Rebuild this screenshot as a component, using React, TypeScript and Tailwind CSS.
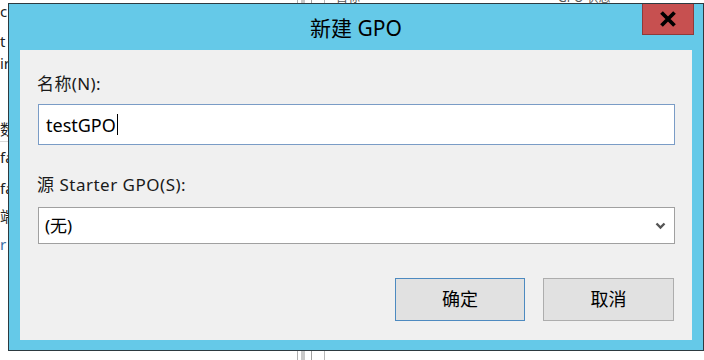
import React from "react";

const FONT = { fontFamily: '"Noto Sans", "Noto Sans CJK SC", sans-serif' };

function BehindWindow() {
  return (
    <div className="flex w-[704px] h-[360px]">
      <div className="w-[8px] shrink-0 flex flex-col text-[15px] leading-[18px] text-[#222] overflow-hidden whitespace-nowrap pt-[2px]">
        <div className="h-[30px]">c</div>
        <div className="h-[22px]">t</div>
        <div className="h-[66px]">ir</div>
        <div className="h-[22px] border-b border-[#d8d8d8]">数</div>
        <div className="h-[30px] pt-[6px]">fa</div>
        <div className="h-[29px] pt-[7px]">fa</div>
        <div className="h-[28px] pt-[6px]">端</div>
        <div className="pt-[6px] text-[#3a6ea5]">r</div>
      </div>
      <div className="w-[289px] shrink-0" />
      <div className="w-px bg-[#b0b0b0]" />
      <div className="w-[3px]" />
      <div className="w-[4px] bg-[#c8c8c8]" />
      <div className="w-[6px]" />
      <div className="w-px bg-[#a0a0a0]" />
      <div className="w-[12px]" />
      <div className="w-px bg-[#b8b8b8]" />
      <div className="flex-1 flex items-start text-[12px] text-[#555] leading-none -mt-[8px]">
        <span className="ml-[11px]">目标</span>
        <span className="ml-[198px]">GPO 状态</span>
      </div>
    </div>
  );
}

export default function App() {
  return (
    <div className="relative w-[704px] h-[360px] overflow-hidden bg-white" style={FONT}>
      <BehindWindow />

      {/* dialog window on the desktop */}
      <div className="absolute left-[8px] top-[3px] w-[696px] h-[348px] border border-[#2d3a40] bg-[#65c9e8] flex flex-col">
        <div className="h-[46px] flex items-start shrink-0 px-[9px]">
          <div className="w-[52px] shrink-0" />
          <div className="flex-1 h-full flex items-center justify-center">
            <span className="text-[21px] text-black leading-none mt-[2px]">新建 GPO</span>
          </div>
          <div className="w-[52px] h-[31px] shrink-0 bg-[#c75050] border border-[#8f3a3a] border-t-0 flex items-center justify-center">
            <svg width="18" height="16" viewBox="0 0 18 16">
              <path d="M2.5 1.5 L15.5 14.5 M15.5 1.5 L2.5 14.5" stroke="#000" strokeWidth="3.8" strokeLinecap="butt" />
            </svg>
          </div>
        </div>
        <div className="mx-[11px] w-[672px] h-[290px] bg-[#f0f0f0] flex flex-col pl-[18px]">
          <div className="mt-[22px] -ml-[1px] h-[23px] text-[17px] leading-[23px] tracking-[0.4px] text-[#1a1a1a]">名称(N):</div>
          <div className="mt-[9px] w-[637px] h-[41px] bg-white border border-[#7a9cc6] flex items-center pl-[7px]">
            <span className="text-[18px] text-black leading-none">testGPO</span>
            <span className="w-px h-[21px] bg-black ml-[1px]" />
          </div>
          <div className="mt-[28px] -ml-[1px] h-[23px] text-[17px] leading-[23px] tracking-[0.5px] text-[#1a1a1a]">源 Starter GPO(S):</div>
          <div className="mt-[11px] w-[637px] h-[37px] bg-white border border-[#a0a0a0] flex items-center pl-[6px] pr-[8px]">
            <span className="text-[17px] text-black leading-none flex-1">(无)</span>
            <svg width="11" height="8" viewBox="0 0 11 8">
              <path d="M1.5 1.5 L5.5 5.5 L9.5 1.5" stroke="#555" strokeWidth="2.4" fill="none" />
            </svg>
          </div>
          <div className="mt-[34px] flex gap-[18px] pl-[357px]">
            <div className="w-[130px] h-[43px] bg-[#e1e1e1] border border-[#4d8ac0] flex items-center justify-center text-[18px] text-black">确定</div>
            <div className="w-[131px] h-[43px] bg-[#e1e1e1] border border-[#adadad] flex items-center justify-center text-[18px] text-black">取消</div>
          </div>
        </div>
      </div>
    </div>
  );
}
